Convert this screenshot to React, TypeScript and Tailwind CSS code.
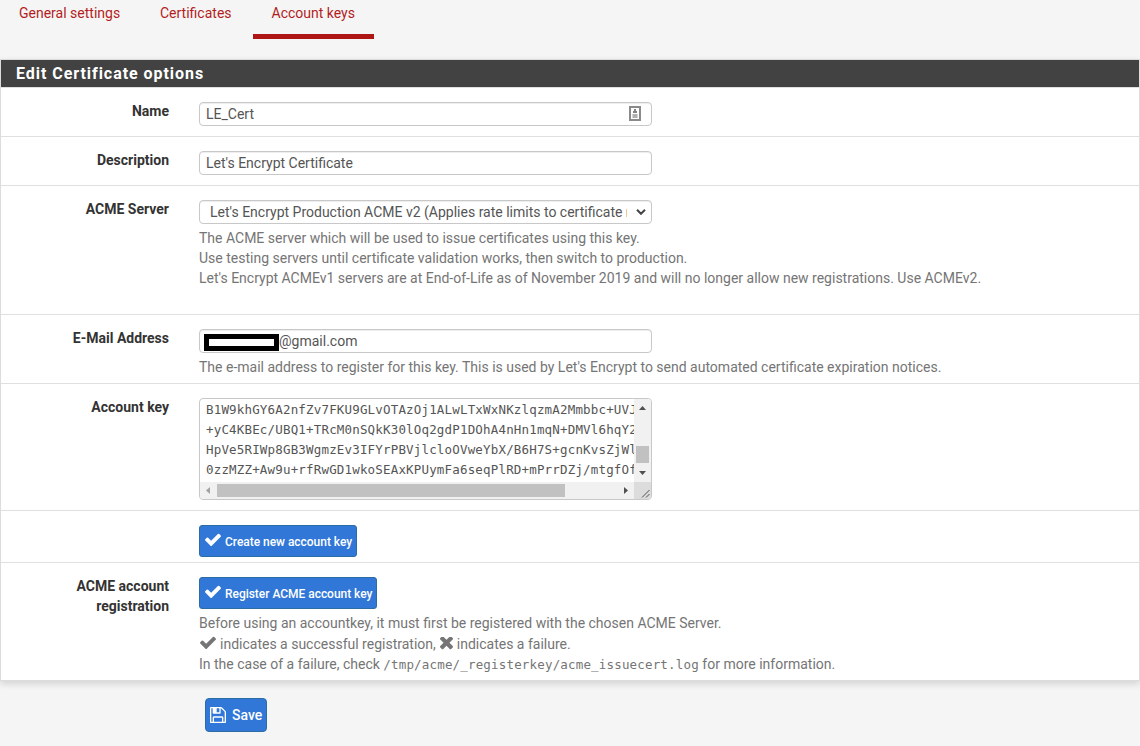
import type { ReactNode } from 'react';

const CHECK =
  'M1671 566q0 40-28 68l-724 724-136 136q-28 28-68 28t-68-28l-136-136-362-362q-28-28-28-68t28-68l136-136q28-28 68-28t68 28l294 295 656-657q28-28 68-28t68 28l136 136q28 28 28 68z';
const TIMES =
  'M1490 1322q0 40-28 68l-136 136q-28 28-68 28t-68-28l-294-294-294 294q-28 28-68 28t-68-28l-136-136q-28-28-28-68t28-68l294-294-294-294q-28-28-28-68t28-68l136-136q28-28 68-28t68 28l294 294 294-294q28-28 68-28t68 28l136 136q28 28 28 68t-28 68l-294 294 294 294q28 28 28 68z';
const FLOPPY =
  'M512 1536h768v-384h-768v384zm896 0h128v-896q0-14-10-38.5t-20-34.5l-281-281q-10-10-34-20t-39-10v416q0 40-28 68t-68 28h-576q-40 0-68-28t-28-68v-416h-128v1280h128v-416q0-40 28-68t68-28h832q40 0 68 28t28 68v416zm-384-928v-320q0-13-9.5-22.5t-22.5-9.5h-192q-13 0-22.5 9.5t-9.5 22.5v320q0 13 9.5 22.5t22.5 9.5h192q13 0 22.5-9.5t9.5-22.5zm640 32v928q0 40-28 68t-68 28h-1344q-40 0-68-28t-28-68v-1344q0-40 28-68t68-28h928q40 0 88 20t76 48l280 280q28 28 48 76t20 88z';

function Glyph({ d, viewBox, className }: { d: string; viewBox: string; className: string }) {
  return (
    <svg viewBox={viewBox} className={className} fill="currentColor" aria-hidden="true">
      <path d={d} />
    </svg>
  );
}

function Row({ label, height, children }: { label?: ReactNode; height: string; children: ReactNode }) {
  return (
    <div className={`flex border-t border-[#e0e0e0] ${height}`}>
      <div className="w-[168px] shrink-0 pt-[13px] text-right font-bold text-[#333]">{label}</div>
      <div className="ml-[30px] min-w-0 flex-1 pt-[14px]">{children}</div>
    </div>
  );
}

function Field({ children }: { children: ReactNode }) {
  return (
    <div className="flex h-6 w-[453px] items-center overflow-hidden rounded-[4px] border border-[#c8c8c8] bg-white pl-1.5 whitespace-nowrap text-[#555] shadow-[inset_0_1px_1px_rgba(0,0,0,0.075)]">
      {children}
    </div>
  );
}

function KeyButton({ children, width }: { children: ReactNode; width: string }) {
  return (
    <button
      className={`flex h-8 items-center rounded-[3px] border border-[#2e6da4] bg-[#3077d8] pl-[5px] text-[12px] font-medium whitespace-nowrap text-white ${width}`}
    >
      <Glyph d={CHECK} viewBox="121 270 1550 1252" className="mb-[3px] h-[13px] w-4" />
      <span className="ml-1 pt-0.5 tracking-[-0.03px]">{children}</span>
    </button>
  );
}

const KEY_LINES = [
  'B1W9khGY6A2nfZv7FKU9GLvOTAzOj1ALwLTxWxNKzlqzmA2Mmbbc+UVJ',
  '+yC4KBEc/UBQ1+TRcM0nSQkK30lOq2gdP1DOhA4nHn1mqN+DMVl6hqY2',
  'HpVe5RIWp8GB3WgmzEv3IFYrPBVjlcloOVweYbX/B6H7S+gcnKvsZjWl',
  '0zzMZZ+Aw9u+rfRwGD1wkoSEAxKPUymFa6seqPlRD+mPrrDZj/mtgfOf',
];

function KeyArea() {
  return (
    <div className="grid h-[102px] w-[453px] grid-cols-[434px_17px] grid-rows-[83px_17px] overflow-hidden rounded-[4px] border border-[#c8c8c8] bg-white">
      <div className="overflow-hidden pt-px pl-1.5 font-['DejaVu_Sans_Mono',monospace] text-[12.5px] leading-5 tracking-[0.17px] whitespace-pre text-[#555]">
        {KEY_LINES.map((line) => (
          <div key={line}>{line}</div>
        ))}
      </div>
      <div className="flex flex-col items-center bg-[#f1f1f1]">
        <svg className="mt-[7px] h-1 w-[7px]" viewBox="0 0 7 4" fill="#505050"><path d="M0 4 3.5 0 7 4z" /></svg>
        <div className="mt-9 h-[17px] w-[13px] bg-[#c1c1c1]" />
        <svg className="mt-2 h-1 w-[7px]" viewBox="0 0 7 4" fill="#505050"><path d="M0 0 3.5 4 7 0z" /></svg>
      </div>
      <div className="flex items-center bg-[#f1f1f1]">
        <svg className="ml-1.5 h-[7px] w-1" viewBox="0 0 4 7" fill="#a3a3a3"><path d="M4 0 0 3.5 4 7z" /></svg>
        <div className="ml-[7px] h-[13px] w-[348px] bg-[#c1c1c1]" />
        <svg className="ml-[59px] h-[7px] w-1" viewBox="0 0 4 7" fill="#505050"><path d="M0 0 4 3.5 0 7z" /></svg>
      </div>
      <svg className="h-[17px] w-[17px] bg-[#dcdcdc]" viewBox="0 0 17 17" stroke="#505050" fill="none">
        <path d="M8 15.5 15.5 8M12 15.5 15.5 12" strokeWidth="1" />
      </svg>
    </div>
  );
}

export default function App() {
  return (
    <div className="h-[746px] overflow-hidden bg-[#f5f5f5] font-['Roboto',sans-serif] text-[14px] leading-5 text-[#757575]">
      <nav className="flex h-[39px] pt-[3px] text-[#b31d1d]">
        <a className="w-[139px] pl-[19px]">General settings</a>
        <a className="w-[114px] pl-[21px]">Certificates</a>
        <a className="w-[121px] border-b-[5px] border-[#b01515] pl-[18.5px]">Account keys</a>
      </nav>

      <section className="mt-5 h-[622px] border border-[#dcdcdc] bg-white shadow-[0_3px_7px_rgba(0,0,0,0.14)]">
        <h2 className="h-[27px] bg-[#424242] pl-[15px] text-[16px] leading-[27px] font-bold tracking-[0.95px] text-white">
          Edit Certificate options
        </h2>

        <Row label="Name" height="h-[49px]">
          <Field>
            <span className="flex-1">LE_Cert</span>
            <svg className="mr-[10px] mb-px h-[15px] w-3" viewBox="0 0 12 15" fill="none">
              <rect x="1" y="1" width="10" height="13" stroke="#8a8a8a" strokeWidth="2" />
              <path d="M5 3h2v2h1v2H4V5h1z" fill="#858585" />
              <path d="M3.5 8h5v4h-5z" fill="#b0b0b0" />
            </svg>
          </Field>
        </Row>

        <Row label="Description" height="h-[49px]">
          <Field>Let's Encrypt Certificate</Field>
        </Row>

        <Row label="ACME Server" height="h-[129px]">
          <Field>
            <span className="ml-1 w-[417px] shrink-0 overflow-hidden">
              Let's Encrypt Production ACME v2 (Applies rate limits to certificate requests)
            </span>
            <svg className="ml-[9px] h-1.5 w-[10px] shrink-0" viewBox="0 0 10 6" fill="none" stroke="#444" strokeWidth="2">
              <path d="m1 .8 4 4 4-4" />
            </svg>
          </Field>
          <div className="pt-1">
            <p>The ACME server which will be used to issue certificates using this key.</p>
            <p>Use testing servers until certificate validation works, then switch to production.</p>
            <p>
              Let's Encrypt ACMEv1 servers are at End-of-Life as of November 2019 and will no longer allow new
              registrations. Use ACMEv2.
            </p>
          </div>
        </Row>

        <Row label="E-Mail Address" height="h-[69px]">
          <Field>
            <span className="-ml-0.5 mt-0.5 h-[17px] w-[75px] border-[5px] border-black bg-white" />
            <span>@gmail.com</span>
          </Field>
          <p className="pt-1">
            The e-mail address to register for this key. This is used by Let's Encrypt to send automated certificate
            expiration notices.
          </p>
        </Row>

        <Row label="Account key" height="h-[127px]">
          <KeyArea />
        </Row>

        <Row height="h-[52px]">
          <KeyButton width="w-[158px]">Create new account key</KeyButton>
        </Row>

        <Row label={<>ACME account<br />registration</>} height="h-[118px]">
          <KeyButton width="w-[178px]">Register ACME account key</KeyButton>
          <div className="pt-1">
            <p>Before using an accountkey, it must first be registered with the chosen ACME Server.</p>
            <p className="flex h-[21px] items-center">
              <Glyph d={CHECK} viewBox="121 270 1550 1252" className="ml-px mb-0.5 h-[13px] w-4" />
              <span className="ml-1 pt-px">indicates a successful registration,</span>
              <Glyph d={TIMES} viewBox="302 430 1188 1188" className="ml-1 mb-px h-[13px] w-[13px]" />
              <span className="ml-1 pt-px">indicates a failure.</span>
            </p>
            <p>
              In the case of a failure, check{' '}
              <span className="font-['DejaVu_Sans_Mono',monospace] text-[12.5px] leading-none tracking-[0.17px]">
                /tmp/acme/_registerkey/acme_issuecert.log
              </span>{' '}
              for more information.
            </p>
          </div>
        </Row>
      </section>

      <button className="mt-[17px] ml-[205px] flex h-[34px] w-[62px] items-center rounded-[4px] border border-[#2e6da4] bg-[#3077d8] pl-1 font-medium text-white">
        <Glyph d={FLOPPY} viewBox="128 128 1536 1536" className="h-4 w-4" />
        <span className="ml-1.5 pb-px">Save</span>
      </button>
    </div>
  );
}
